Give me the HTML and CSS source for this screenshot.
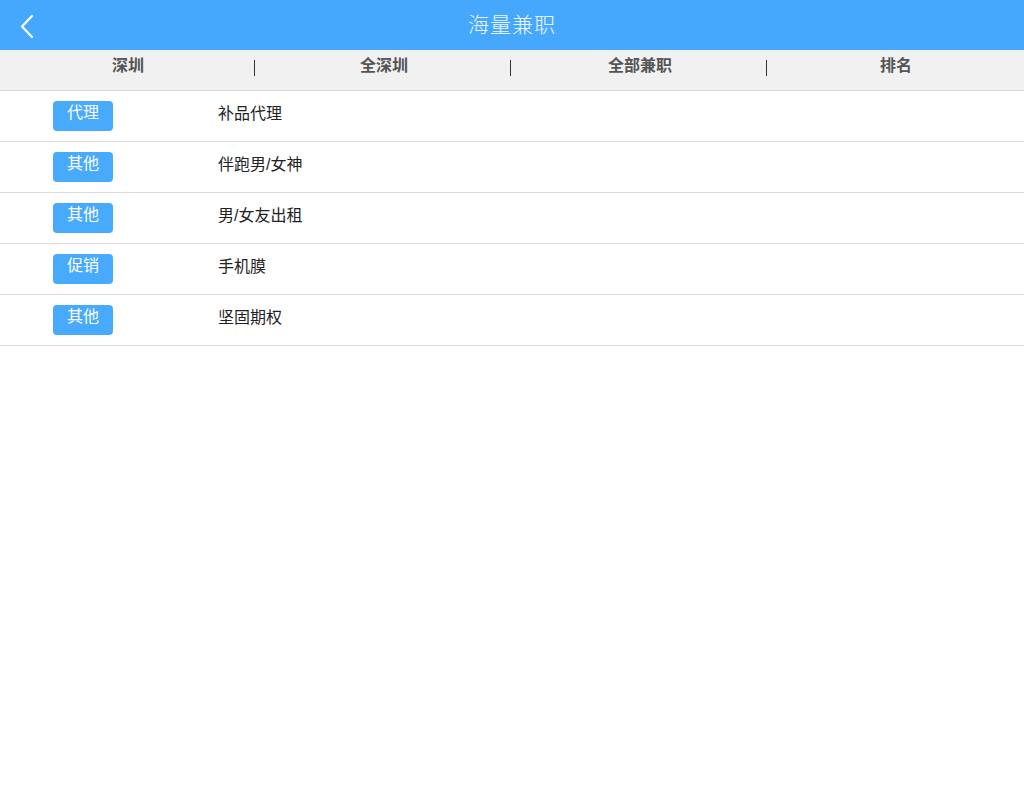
FILE: index.html
```html
<!DOCTYPE html>
<html lang="zh-CN">
<head>
<meta charset="utf-8">
<title>海量兼职</title>
<link rel="stylesheet" href="styles.css">
</head>
<body>
<header class="topbar">
  <a class="back" href="#" aria-label="返回">
    <svg width="16" height="26" viewBox="0 0 16 26"><polyline points="13,2 3,12.5 13,23" fill="none" stroke="#fff" stroke-width="2.2" stroke-linecap="round" stroke-linejoin="round"/></svg>
  </a>
  <h1 class="title">海量兼职</h1>
</header>
<nav class="tabs">
  <div class="tab"><span class="tab-text">深圳</span><span class="sep"></span></div>
  <div class="tab"><span class="tab-text">全深圳</span><span class="sep"></span></div>
  <div class="tab"><span class="tab-text">全部兼职</span><span class="sep"></span></div>
  <div class="tab"><span class="tab-text">排名</span></div>
</nav>
<ul class="list">
  <li class="row"><span class="badge">代理</span><span class="name">补品代理</span></li>
  <li class="row"><span class="badge">其他</span><span class="name">伴跑男/女神</span></li>
  <li class="row"><span class="badge">其他</span><span class="name">男/女友出租</span></li>
  <li class="row"><span class="badge">促销</span><span class="name">手机膜</span></li>
  <li class="row"><span class="badge">其他</span><span class="name">坚固期权</span></li>
</ul>
</body>
</html>
```
FILE: styles.css
```css
* { box-sizing: border-box; }
html, body { margin: 0; padding: 0; background: #fff; }
body { font-family: "Liberation Sans", "Noto Sans CJK SC", sans-serif; width: 1024px; }
.topbar {
  height: 50px;
  background: #45a8fd;
  display: flex;
  align-items: center;
  justify-content: center;
  position: relative;
}
.back {
  position: absolute;
  left: 19px;
  top: 14px;
  display: block;
  width: 16px;
  height: 26px;
}
.back svg { display: block; }
.title {
  margin: 0;
  font-size: 21px;
  font-weight: 300;
  color: #eef6ff;
  letter-spacing: 1px;
  line-height: 50px;
  font-family: "Noto Sans CJK SC", sans-serif;
  position: relative;
  top: -2px;
}
.tabs {
  height: 41px;
  background: #f1f1f1;
  border-bottom: 1px solid #dcdcdc;
  display: flex;
}
.tab {
  flex: 1;
  position: relative;
  display: flex;
  justify-content: center;
  align-items: flex-start;
  padding-top: 4px;
}
.tab-text {
  font-size: 16px;
  font-weight: 700;
  color: #555;
  line-height: 24px;
}
.sep {
  position: absolute;
  right: 1px;
  top: 10px;
  width: 1px;
  height: 16px;
  background: #333;
}
.list { list-style: none; margin: 0; padding: 0; }
.row {
  height: 51px;
  border-bottom: 1px solid #dcdcdc;
  display: flex;
  align-items: flex-start;
  padding-top: 10px;
}
.badge {
  margin-left: 53px;
  width: 60px;
  height: 30px;
  background: #48aafd;
  border-radius: 4px;
  color: #fff;
  font-size: 16px;
  line-height: 23px;
  text-align: center;
}
.name {
  margin-left: 105px;
  padding-top: 1px;
  font-size: 16px;
  color: #222;
  line-height: 23px;
}
```
